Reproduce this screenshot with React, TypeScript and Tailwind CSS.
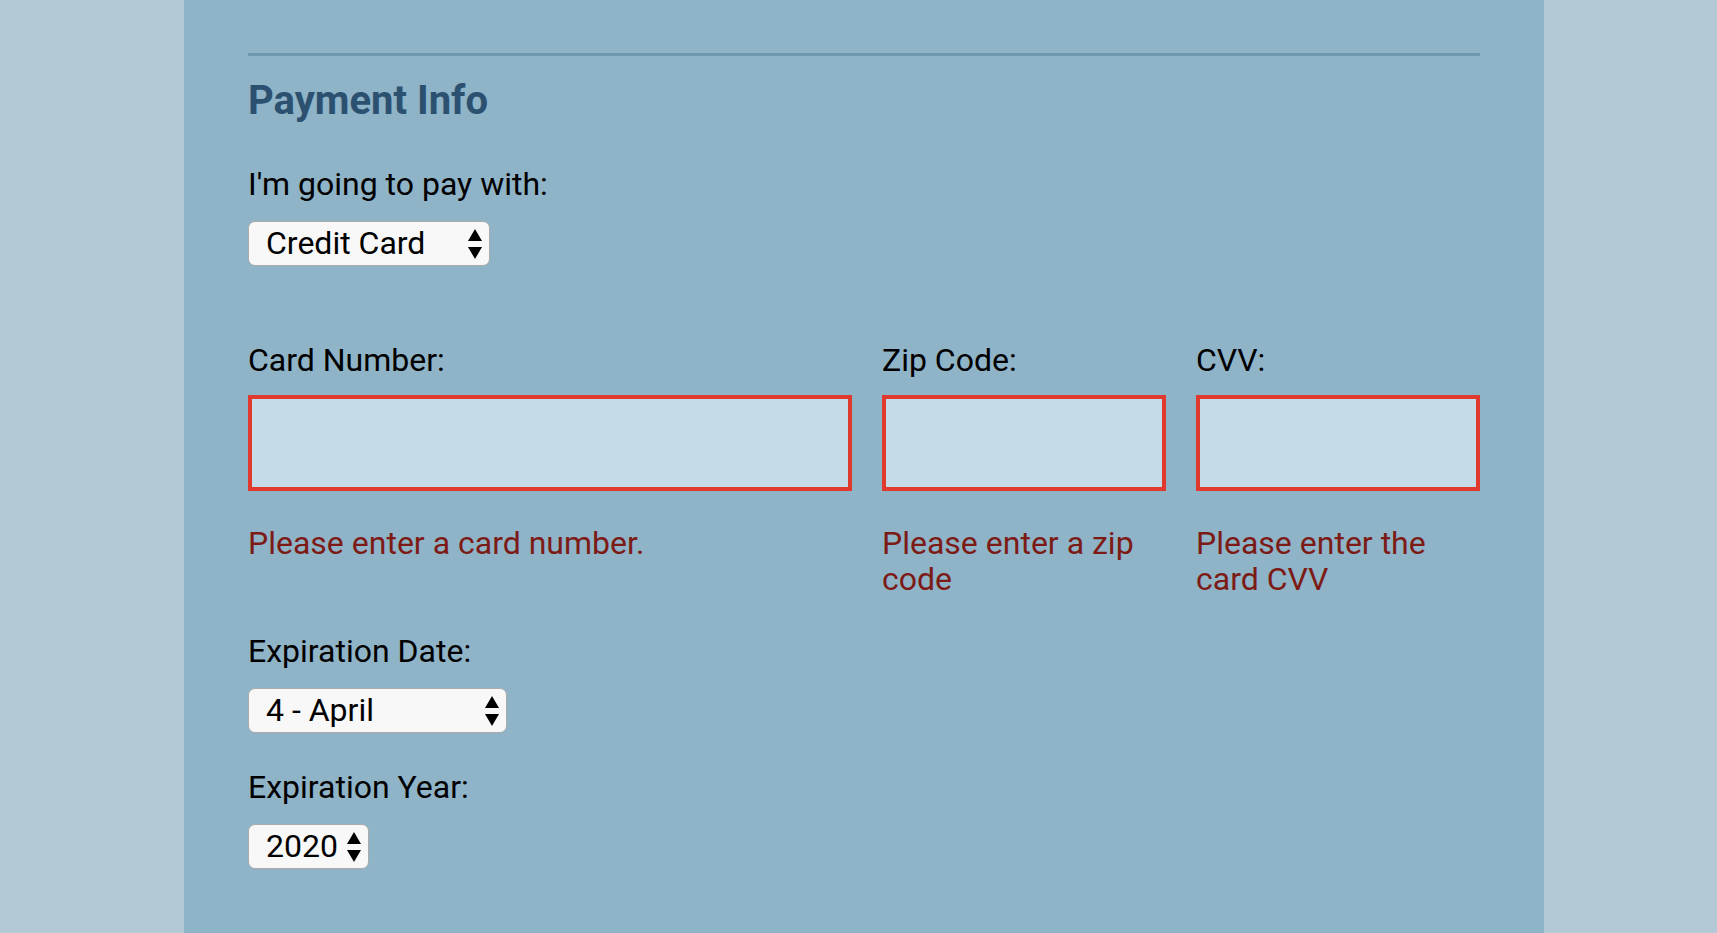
import { useState } from 'react';

type SelectProps = {
  value: string;
  options: string[];
  width: string;
  onChange: (v: string) => void;
};

function SelectArrows() {
  return (
    <svg width="14" height="30" viewBox="0 0 14 30" className="shrink-0">
      <polygon points="7,0 14,12 0,12" fill="#000" />
      <polygon points="0,18 14,18 7,30" fill="#000" />
    </svg>
  );
}

function FakeSelect({ value, options, width, onChange }: SelectProps) {
  return (
    <div className={`relative flex h-[45px] items-center justify-between rounded-[7px] border border-[#ababab] bg-[#f8f8f8] pl-[17px] pr-[7px] ${width}`}>
      <span className="leading-[37px] text-black">{value}</span>
      <SelectArrows />
      <select
        className="absolute inset-0 cursor-pointer opacity-0"
        value={value}
        onChange={(e) => onChange(e.target.value)}
      >
        {options.map((o) => (
          <option key={o} value={o}>{o}</option>
        ))}
      </select>
    </div>
  );
}

const months = [
  '1 - January', '2 - February', '3 - March', '4 - April', '5 - May', '6 - June',
  '7 - July', '8 - August', '9 - September', '10 - October', '11 - November', '12 - December',
];
const years = ['2020', '2021', '2022', '2023', '2024', '2025'];

function Field({ label, error }: { label: string; error: string }) {
  return (
    <div className="flex flex-col">
      <label className="leading-[37px] text-black">{label}</label>
      <input
        type="text"
        className="mt-4 h-[96px] w-full border-4 border-[#e03a2e] bg-[#c5dbe7] px-3 outline-none"
      />
      <p className="mt-[34px] leading-[36px] text-[#7c1b16]">{error}</p>
    </div>
  );
}

export default function App() {
  const [payment, setPayment] = useState('Credit Card');
  const [month, setMonth] = useState('4 - April');
  const [year, setYear] = useState('2020');

  return (
    <div className="min-h-screen bg-[#b3c9d6] font-['Roboto',sans-serif] text-[32px]">
      <div className="ml-[184px] min-h-[933px] w-[1360px] bg-[#8fb3c7] px-16 pt-[53px]">
        <div className="border-t-[3px] border-[#6f97ae]" />
        <h2 className="mt-[21px] text-[40px] font-bold leading-[47px] text-[#2c5170]">Payment Info</h2>

        <div className="mt-[42px] flex flex-col items-start">
          <label className="leading-[37px] text-black">I'm going to pay with:</label>
          <div className="mt-[18px]">
            <FakeSelect
              value={payment}
              options={['Credit Card', 'PayPal', 'Bitcoin']}
              width="w-[242px]"
              onChange={setPayment}
            />
          </div>
        </div>

        <div className="mt-[76px] grid grid-cols-[604px_1fr_1fr] gap-x-[30px]">
          <Field label="Card Number:" error="Please enter a card number." />
          <Field label="Zip Code:" error="Please enter a zip code" />
          <Field label="CVV:" error="Please enter the card CVV" />
        </div>

        <div className="mt-9 flex flex-col items-start">
          <label className="leading-[37px] text-black">Expiration Date:</label>
          <div className="mt-[18px]">
            <FakeSelect value={month} options={months} width="w-[259px]" onChange={setMonth} />
          </div>
        </div>

        <div className="mt-9 flex flex-col items-start">
          <label className="leading-[37px] text-black">Expiration Year:</label>
          <div className="mt-[18px]">
            <FakeSelect value={year} options={years} width="w-[121px]" onChange={setYear} />
          </div>
        </div>
      </div>
    </div>
  );
}
